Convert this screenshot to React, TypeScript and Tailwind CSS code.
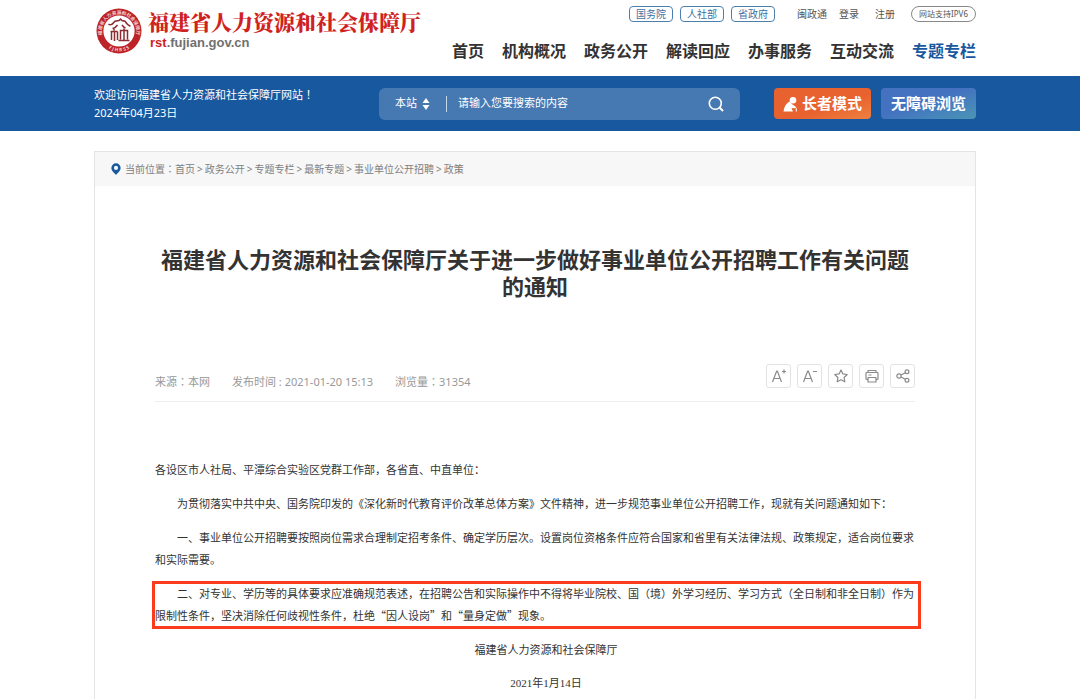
import React from "react";

const sans = "font-['Noto_Sans','Noto_Sans_CJK_SC',sans-serif]";

const departments = ["国务院", "人社部", "省政府"];
const nav = ["首页", "机构概况", "政务公开", "解读回应", "办事服务", "互动交流", "专题专栏"];
const crumbs = ["首页", "政务公开", "专题专栏", "最新专题", "事业单位公开招聘", "政策"];

// The TC face centres full-width punctuation in its cell.
function Mark({ children }: { children: string }) {
  return <span className="font-['Noto_Sans_CJK_TC',sans-serif] leading-none">{children}</span>;
}

function Seal() {
  return (
    <svg viewBox="0 0 46 46" className="size-[46px] shrink-0" aria-hidden="true">
      <defs>
        <path id="arcTop" d="M6.600 29 A17.300 17.300 0 1 1 39.400 29" />
        <path id="arcBottom" d="M4.500 32 A20.700 20.700 0 0 0 41.500 32" />
      </defs>
      <circle cx="23" cy="23" r="22.500" fill="#bd2429" />
      <circle cx="23" cy="23" r="15.600" fill="#fff" />
      <g fill="#f3cfcf" fontSize="4.700" fontWeight="700" className={sans}>
        <text>
          <textPath href="#arcTop" startOffset="2">福建省人力资源和社会保障厅</textPath>
        </text>
        <text textAnchor="middle" xmlSpace="preserve">
          <textPath href="#arcBottom" startOffset="50%">F J H R S S</textPath>
        </text>
      </g>
      <g fill="none" stroke="#8c2b30" strokeWidth="1.500">
        <path d="M12.500 16c1.500 1.300 3.500.8 5-1.300l1.500-1.500 4-.7 1.500-1.500L26 12.500l3 .7c1.500 2.500 3.500 4.500 5.500 5M16.500 20.500c3-.5 4-2 5-3.500M26 17c1 1.500 2 2.500 3.500 3" />
        <path d="M18 20.500v2M14.500 23.500h7M15.500 23.500v8.500M18.500 23.500v9.500M21.500 23.500v8.500" />
        <path d="M24.500 31.500v-9h7v9M28 20.500v12M22.500 32.500h11" />
      </g>
    </svg>
  );
}

function Tool({ label, children }: { label: string; children: React.ReactNode }) {
  return (
    <button
      aria-label={label}
      className="flex h-6 w-[25px] items-center justify-center rounded-[3px] border border-[#e3e3e3] text-[#8a8a8a]"
    >
      <svg
        viewBox="0 0 16 16"
        className="size-4"
        fill="none"
        stroke="currentColor"
        strokeWidth="1.200"
        strokeLinejoin="round"
        aria-hidden="true"
      >
        {children}
      </svg>
    </button>
  );
}

export default function App() {
  return (
    <div className={`min-h-screen overflow-hidden bg-white text-[#333] ${sans}`}>
      <header>
        <div className="pr-[10px]">
          <div className="mx-auto flex h-[76px] max-w-[882px] justify-between">
            <a href="#" className="flex gap-[6px] pt-2 pl-[2px]">
              <Seal />
              <span className="flex flex-col">
                <span className="font-['Noto_Serif_CJK_SC','Noto_Sans_CJK_SC',serif] text-[21px] leading-[27px] font-black whitespace-nowrap text-[#cf2220]">
                  福建省人力资源和社会保障厅
                </span>
                <span className="pl-[2px] font-['Liberation_Sans',sans-serif] text-[13px] leading-[15px] font-bold text-[#707070]">
                  <span className="text-[#cf2220]">rst</span>.fujian.gov.cn
                </span>
              </span>
            </a>
            <div className="flex flex-col items-end pt-[6px]">
              <div className="flex h-4 items-center text-[10px] leading-4 whitespace-nowrap text-[#555]">
                <div className="flex gap-[7px]">
                  {departments.map((d) => (
                    <a
                      key={d}
                      href="#"
                      className="flex h-4 w-11 items-center justify-center rounded-[4px] border border-[#4b7fae] text-[#3b6f9f]"
                    >
                      {d}
                    </a>
                  ))}
                </div>
                <a href="#" className="ml-[22px]">闽政通</a>
                <a href="#" className="ml-3">登录</a>
                <a href="#" className="ml-4">注册</a>
                <a
                  href="#"
                  className="ml-4 flex h-4 w-[65px] items-center justify-center rounded-full border border-[#888] text-[8px]"
                >
                  网站支持IPV6
                </a>
              </div>
              <nav className="mt-4 flex gap-[18px] text-[16px] leading-[26px] font-bold whitespace-nowrap">
                {nav.map((n) => (
                  <a key={n} href="#" className={n === "专题专栏" ? "text-[#17589f]" : "text-[#333]"}>
                    {n}
                  </a>
                ))}
              </nav>
            </div>
          </div>
        </div>

        <div className="bg-[#17589f] pr-[10px]">
          <div className="mx-auto flex h-[55px] max-w-[882px] items-center text-[11px] text-white">
            <div className="w-[285px] leading-[18px] whitespace-nowrap">
              <p>欢迎访问福建省人力资源和社会保障厅网站<Mark>！</Mark></p>
              <p>2024年04月23日</p>
            </div>
            <form className="flex h-8 flex-1 items-center rounded-[6px] bg-[#4679b2] pr-4 pl-4">
              <label className="flex items-center gap-1">
                <select
                  aria-label="搜索范围"
                  className="w-[23px] appearance-none bg-transparent text-[11px] text-white outline-none"
                >
                  <option>本站</option>
                </select>
                <svg viewBox="0 0 8 12" className="h-3 w-2" fill="#fff" aria-hidden="true">
                  <path d="M4 0 7.500 5h-7zM4 12 .5 7h7z" />
                </svg>
              </label>
              <span className="ml-4 h-4 w-px bg-[#c3d5e8]" />
              <input
                type="text"
                aria-label="搜索内容"
                placeholder="请输入您要搜索的内容"
                className="ml-[11px] min-w-0 flex-1 bg-transparent text-[11px] text-white outline-none placeholder:text-white"
              />
              <button type="button" aria-label="搜索">
                <svg viewBox="0 0 16 16" className="size-4" fill="none" stroke="#fff" strokeWidth="1.600" aria-hidden="true">
                  <circle cx="7.300" cy="7.300" r="6" />
                  <path d="m11.500 11.500 3.500 3.500" strokeWidth="2" />
                </svg>
              </button>
            </form>
            <button className="ml-[34px] flex h-[31px] w-[97px] items-center justify-center gap-1 rounded-[4px] bg-linear-to-br from-[#e8622f] from-60% to-[#ee8140] text-[15px] font-bold whitespace-nowrap">
              <svg viewBox="0 0 15 16" className="h-4 w-[15px] shrink-0" fill="#fff" aria-hidden="true">
                <circle cx="10" cy="4.200" r="3.300" />
                <path d="M6.500 5.500C3 7.500 1 11 .5 15.500h9.500L8.500 12l3.500.2.800-1.400L9.500 8.500z" />
                <path d="M11 11.500c1.600-.6 2.300.2 2.300 1.500v2.500" fill="none" stroke="#fff" strokeWidth="1" />
              </svg>
              长者模式
            </button>
            <button className="ml-[10px] h-[31px] w-[95px] rounded-[4px] bg-linear-to-br from-[#4472c0] from-45% to-[#4a95b5] text-[15px] font-bold whitespace-nowrap">
              无障碍浏览
            </button>
          </div>
        </div>
      </header>

      <div className="pt-5 pr-[10px]">
        <main className="mx-auto max-w-[882px] border border-[#e4e4e4]">
          <div className="flex h-[34px] items-center bg-[#f7f7f7] pl-4 text-[10px] whitespace-nowrap text-[#808080]">
            <svg viewBox="0 0 10 12" className="mr-1 h-3 w-[10px]" aria-hidden="true">
              <path
                fillRule="evenodd"
                fill="#17589f"
                d="M5 .3A4.600 4.600 0 0 0 .4 5C.4 8 3 9.500 5 12c2-2.500 4.600-4 4.600-7A4.600 4.600 0 0 0 5 .3zm0 2.500a2.100 2.100 0 1 1 0 4.200 2.100 2.100 0 0 1 0-4.200z"
              />
            </svg>
            <span>当前位置<Mark>：</Mark></span>
            {crumbs.map((c, i) => (
              <React.Fragment key={c}>
                {i > 0 && <span className="px-[2px]">&gt;</span>}
                <a href="#">{c}</a>
              </React.Fragment>
            ))}
          </div>

          <article className="px-[60px] pt-[60px]">
            <h1 className="text-center text-[22px] leading-[27px] font-bold">
              福建省人力资源和社会保障厅关于进一步做好事业单位公开招聘工作有关问题的通知
            </h1>

            <div className="mt-16 flex items-start justify-between border-b border-[#ededed] pb-[10px]">
              <div className="flex gap-[22px] pt-[9px] text-[11px] leading-[18px] whitespace-nowrap text-[#999]">
                <span>来源<Mark>：</Mark>本网</span>
                <span>发布时间 : 2021-01-20 15:13</span>
                <span>浏览量<Mark>：</Mark>31354</span>
              </div>
              <div className="flex gap-[6px]">
                <Tool label="放大字体">
                  <path d="m1.500 14 4.200-11h.6l4.200 11M3 10.500h6M11 3.500h4M13 1.500v4" />
                </Tool>
                <Tool label="缩小字体">
                  <path d="m1.500 14 4.200-11h.6l4.200 11M3 10.500h6M11 3.500h4" />
                </Tool>
                <Tool label="收藏">
                  <path d="m8 2 1.900 3.900 4.300.6-3.100 3 .7 4.300L8 11.800l-3.800 2 .7-4.300-3.100-3 4.300-.6z" />
                </Tool>
                <Tool label="打印">
                  <path d="M4 4.500V2.500h8v2M4 11.500H2.800A.8.8 0 0 1 2 10.700V5.300a.8.8 0 0 1 .8-.8h10.400a.8.8 0 0 1 .8.800v5.400a.8.8 0 0 1-.8.800H12M4 9.500h8v4.500H4zM4.500 7h3" />
                </Tool>
                <Tool label="分享">
                  <circle cx="4" cy="8" r="2.200" />
                  <circle cx="12" cy="3.800" r="1.900" />
                  <circle cx="12" cy="12.200" r="1.900" />
                  <path d="m6 7 4.300-2.300M6 9l4.300 2.300" />
                </Tool>
              </div>
            </div>

            <div className="mt-14 flex flex-col gap-3 pb-10 font-['Noto_Sans_CJK_SC',sans-serif] text-[11px] leading-[22px]">
              <p>各设区市人社局、平潭综合实验区党群工作部，各省直、中直单位：</p>
              <p className="indent-[22px]">
                为贯彻落实中共中央、国务院印发的《深化新时代教育评价改革总体方案》文件精神，进一步规范事业单位公开招聘工作，现就有关问题通知如下：
              </p>
              <p className="indent-[22px]">
                一、事业单位公开招聘要按照岗位需求合理制定招考条件、确定学历层次。设置岗位资格条件应符合国家和省里有关法律法规、政策规定，适合岗位要求和实际需要。
              </p>
              <p className="relative indent-[22px]">
                二、对专业、学历等的具体要求应准确规范表述，在招聘公告和实际操作中不得将毕业院校、国（境）外学习经历、学习方式（全日制和非全日制）作为限制性条件，坚决消除任何歧视性条件，杜绝“因人设岗”和“量身定做”现象。
                <span className="pointer-events-none absolute -top-px -right-[6px] -bottom-[3px] -left-[3px] border-[3px] border-[#fa3c1c]" />
              </p>
              <p className="pl-[22px] text-center">福建省人力资源和社会保障厅</p>
              <p className="pl-[22px] text-center font-['Liberation_Serif','Noto_Sans_CJK_SC',serif]">2021年1月14日</p>
            </div>
          </article>
        </main>
      </div>
    </div>
  );
}
